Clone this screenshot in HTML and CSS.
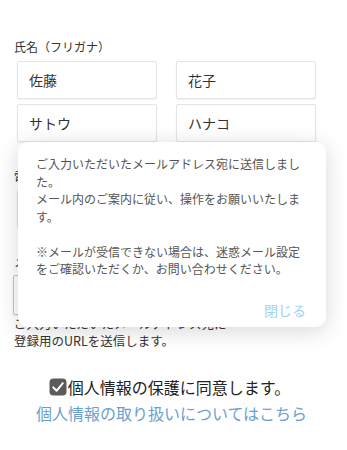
FILE: index.html
```html
<!DOCTYPE html>
<html lang="ja">
<head>
<meta charset="utf-8">
<link rel="stylesheet" href="styles.css">
</head>
<body>
<div class="page">
  <div class="field-label">氏名（フリガナ）</div>
  <div class="name-grid">
    <div class="box">佐藤</div>
    <div class="box">花子</div>
    <div class="box">サトウ</div>
    <div class="box">ハナコ</div>
  </div>
  <div class="field-label gap-label">電話番号</div>
  <div class="box wide"></div>
  <div class="field-label gap-label2">メールアドレス</div>
  <div class="box wide focused"></div>
  <p class="hint">ご入力いただいたメールアドレス宛に<br>登録用のURLを送信します。</p>
  <label class="agree"><span class="check"><svg viewBox="0 0 18 18" width="18" height="18"><rect x="0.5" y="0.5" width="17" height="17" rx="4" fill="#5b5b5b"/><path d="M4.2 9.4 L7.6 12.8 L13.8 5.2" fill="none" stroke="#fff" stroke-width="2" stroke-linecap="round" stroke-linejoin="round"/></svg></span>個人情報の保護に同意します。</label>
  <a class="policy" href="#">個人情報の取り扱いについてはこちら</a>
</div>
<div class="modal">
  <p class="msg">ご入力いただいたメールアドレス宛に送信しました。<br>メール内のご案内に従い、操作をお願いいたします。<br><br>※メールが受信できない場合は、迷惑メール設定をご確認いただくか、お問い合わせください。</p>
  <div class="actions"><span class="close">閉じる</span></div>
</div>
</body>
</html>
```
FILE: styles.css
```css
html, body {
  margin: 0;
  padding: 0;
  background: #fff;
}
body {
  font-family: "Noto Sans CJK JP", "Noto Sans", sans-serif;
  color: #333;
  width: 347px;
  height: 450px;
  overflow: hidden;
  position: relative;
}
.page {
  padding: 39px 0 0 14px;
}
.field-label {
  font-size: 12px;
  line-height: 16px;
  color: #333;
}
.name-grid {
  display: grid;
  grid-template-columns: 140px 140px;
  column-gap: 19px;
  row-gap: 5px;
  margin: 6px 0 0 3px;
}
.box {
  box-sizing: border-box;
  height: 38px;
  border: 1px solid #e4e4e4;
  border-radius: 2px;
  box-shadow: 0 1px 2px rgba(0,0,0,0.06);
  font-size: 14px;
  line-height: 36px;
  padding-left: 11px;
  color: #333;
}
.gap-label { margin-top: 27px; }
.box.wide {
  width: 300px;
  margin: 5px 0 0 3px;
}
.gap-label2 { margin-top: 26px; }
.box.focused {
  margin: 5px 0 0 -1px;
  height: 40px;
  border-color: #a9c9ea;
}
.hint {
  margin: 0;
  font-size: 12.5px;
  line-height: 17px;
  color: #333;
}
.agree {
  display: flex;
  align-items: center;
  justify-content: center;
  margin: 28px 0 0 -14px;
  font-size: 16px;
  line-height: 20px;
  color: #222;
  padding-right: 8px;
}
.check {
  display: flex;
  width: 18px;
  height: 18px;
  margin-right: 1px;
}
.policy {
  display: block;
  text-align: center;
  margin: 6px 0 0 -14px;
  padding-right: 4px;
  font-size: 16px;
  line-height: 20px;
  color: #6b9fd0;
  text-decoration: none;
}
.modal {
  position: absolute;
  left: 18px;
  top: 142px;
  width: 308px;
  height: 185px;
  box-sizing: border-box;
  background: #fff;
  border-radius: 10px;
  box-shadow: 0 4px 22px rgba(0,0,0,0.16);
  padding: 13px 18px 0 18px;
}
.msg {
  margin: 0;
  font-size: 12px;
  line-height: 17.5px;
  color: #555;
}
.actions {
  display: flex;
  justify-content: flex-end;
  margin-top: 23px;
}
.close {
  font-size: 14px;
  line-height: 18px;
  color: #9fd4ef;
  margin-right: 2px;
}
```
